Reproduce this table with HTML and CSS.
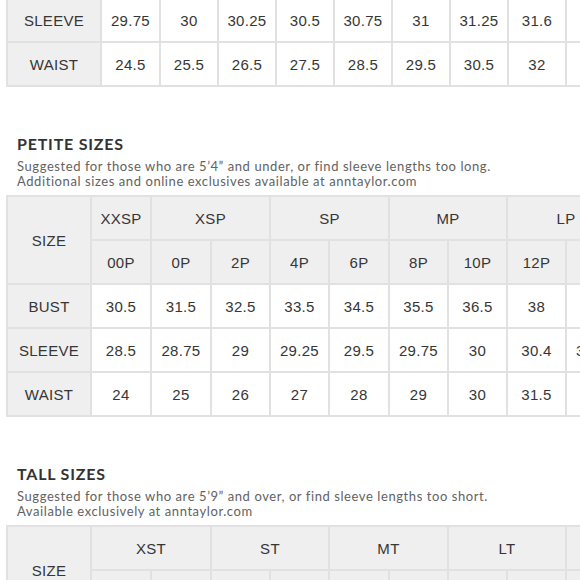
FILE: index.html
```html
<!DOCTYPE html>
<html lang="en">
<head>
<meta charset="utf-8">
<title>Size Chart</title>
<link rel="stylesheet" href="styles.css">
</head>
<body>
<main class="page">
  <div class="chart chart-regular">
    <div class="cell label">SLEEVE</div>
    <div class="cell">29.75</div>
    <div class="cell">30</div>
    <div class="cell">30.25</div>
    <div class="cell">30.5</div>
    <div class="cell">30.75</div>
    <div class="cell">31</div>
    <div class="cell">31.25</div>
    <div class="cell">31.6</div>
    <div class="cell"></div>
    <div class="cell label">WAIST</div>
    <div class="cell">24.5</div>
    <div class="cell">25.5</div>
    <div class="cell">26.5</div>
    <div class="cell">27.5</div>
    <div class="cell">28.5</div>
    <div class="cell">29.5</div>
    <div class="cell">30.5</div>
    <div class="cell">32</div>
    <div class="cell"></div>
  </div>

  <section class="group">
    <h2 class="group-title">PETITE SIZES</h2>
    <p class="group-note">Suggested for those who are 5’4” and under, or find sleeve lengths too long.<br>Additional sizes and online exclusives available at anntaylor.com</p>
    <div class="chart chart-sized">
      <div class="cell label size-label">SIZE</div>
      <div class="cell head">XXSP</div>
      <div class="cell head span2">XSP</div>
      <div class="cell head span2">SP</div>
      <div class="cell head span2">MP</div>
      <div class="cell head span2">LP</div>
      <div class="cell head">00P</div>
      <div class="cell head">0P</div>
      <div class="cell head">2P</div>
      <div class="cell head">4P</div>
      <div class="cell head">6P</div>
      <div class="cell head">8P</div>
      <div class="cell head">10P</div>
      <div class="cell head">12P</div>
      <div class="cell head"></div>

      <div class="cell label">BUST</div>
      <div class="cell">30.5</div>
      <div class="cell">31.5</div>
      <div class="cell">32.5</div>
      <div class="cell">33.5</div>
      <div class="cell">34.5</div>
      <div class="cell">35.5</div>
      <div class="cell">36.5</div>
      <div class="cell">38</div>
      <div class="cell"></div>

      <div class="cell label">SLEEVE</div>
      <div class="cell">28.5</div>
      <div class="cell">28.75</div>
      <div class="cell">29</div>
      <div class="cell">29.25</div>
      <div class="cell">29.5</div>
      <div class="cell">29.75</div>
      <div class="cell">30</div>
      <div class="cell">30.4</div>
      <div class="cell">30.75</div>

      <div class="cell label">WAIST</div>
      <div class="cell">24</div>
      <div class="cell">25</div>
      <div class="cell">26</div>
      <div class="cell">27</div>
      <div class="cell">28</div>
      <div class="cell">29</div>
      <div class="cell">30</div>
      <div class="cell">31.5</div>
      <div class="cell"></div>
    </div>
  </section>

  <section class="group">
    <h2 class="group-title">TALL SIZES</h2>
    <p class="group-note">Suggested for those who are 5’9” and over, or find sleeve lengths too short.<br>Available exclusively at anntaylor.com</p>
    <div class="chart chart-sized">
      <div class="cell label size-label">SIZE</div>
      <div class="cell head span2">XST</div>
      <div class="cell head span2">ST</div>
      <div class="cell head span2">MT</div>
      <div class="cell head span2">LT</div>
      <div class="cell head"></div>
      <div class="cell head"></div>
      <div class="cell head"></div>
      <div class="cell head"></div>
      <div class="cell head"></div>
      <div class="cell head"></div>
      <div class="cell head"></div>
      <div class="cell head"></div>
      <div class="cell head"></div>
      <div class="cell head"></div>
    </div>
  </section>
</main>
</body>
</html>
```

FILE: styles.css
```css
html, body {
  margin: 0;
  padding: 0;
  background: #ffffff;
  overflow: hidden;
}

.page {
  display: flex;
  flex-direction: column;
  align-items: flex-start;
}

.chart {
  display: grid;
  gap: 2px;
  padding: 2px;
  background: #e1e1e1;
  margin-left: 6px;
  width: max-content;
  grid-auto-rows: 42px;
}

.chart-regular {
  margin-top: -3px;
  grid-template-columns: 92px 57px repeat(8, 56px);
}

.chart-sized {
  grid-template-columns: 82px 58px 58px 57px 57px 58px 57px 57px 57px 57px;
}

.cell {
  display: flex;
  align-items: center;
  justify-content: center;
  background: #ffffff;
  color: #363636;
  font-family: "Liberation Sans", Arial, sans-serif;
  font-size: 15px;
  letter-spacing: 0.3px;
  white-space: nowrap;
  overflow: hidden;
}

.cell.label,
.cell.head {
  background: #efefef;
}

.size-label {
  grid-row: span 2;
}

.span2 {
  grid-column: span 2;
}

.group {
  margin-top: 47px;
  display: flex;
  flex-direction: column;
  align-items: flex-start;
}

.group-title {
  margin: 0 0 0 17px;
  font-family: Lato, "Open Sans", sans-serif;
  font-weight: 700;
  font-size: 16px;
  line-height: 20px;
  letter-spacing: 0.8px;
  color: #333333;
}

.group-note {
  margin: 5px 0 6px 17px;
  font-family: Lato, "Open Sans", sans-serif;
  font-size: 13px;
  line-height: 15px;
  letter-spacing: 0.58px;
  color: #626262;
  white-space: nowrap;
}
```
